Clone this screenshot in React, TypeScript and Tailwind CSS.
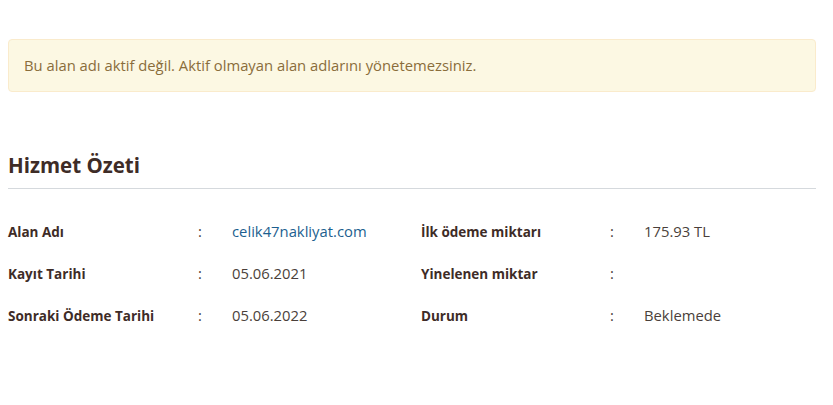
const ROWS: Array<[string, React.ReactNode, string, string]> = [
  ['Alan Adı', <span className="text-[#1d5f8f]">celik47nakliyat.com</span>, 'İlk ödeme miktarı', '175.93 TL'],
  ['Kayıt Tarihi', '05.06.2021', 'Yinelenen miktar', ''],
  ['Sonraki Ödeme Tarihi', '05.06.2022', 'Durum', 'Beklemede'],
]

export default function App() {
  return (
    <div className="min-h-[405px] bg-white pl-2 pr-[17px] pt-[39px] font-['Open_Sans',sans-serif] text-[#4a3f3a]">
      <div className="rounded border border-[#faebcc] bg-[#fcf8e3] px-[15px] py-[15px] text-[14.8px] leading-[21px] text-[#8a6d3b]">
        Bu alan adı aktif değil. Aktif olmayan alan adlarını yönetemezsiniz.
      </div>

      <h2 className="mt-[59px] border-b border-[#d5d9dd] pb-[8px] text-[20.5px] font-bold leading-[29px] text-[#3e2c27]">
        Hizmet Özeti
      </h2>

      <div className="mt-[32px] grid auto-rows-[42px] grid-cols-[190px_34px_189px_189px_34px_1fr] items-baseline text-[14.8px] leading-[21px]">
        {ROWS.map(([l1, v1, l2, v2]) => (
          <div key={l1} className="contents">
            <div className="text-[13.5px] font-bold text-[#3e2c27]">{l1}</div>
            <div>:</div>
            <div>{v1}</div>
            <div className="text-[13.5px] font-bold text-[#3e2c27]">{l2}</div>
            <div>:</div>
            <div>{v2}</div>
          </div>
        ))}
      </div>
    </div>
  )
}
